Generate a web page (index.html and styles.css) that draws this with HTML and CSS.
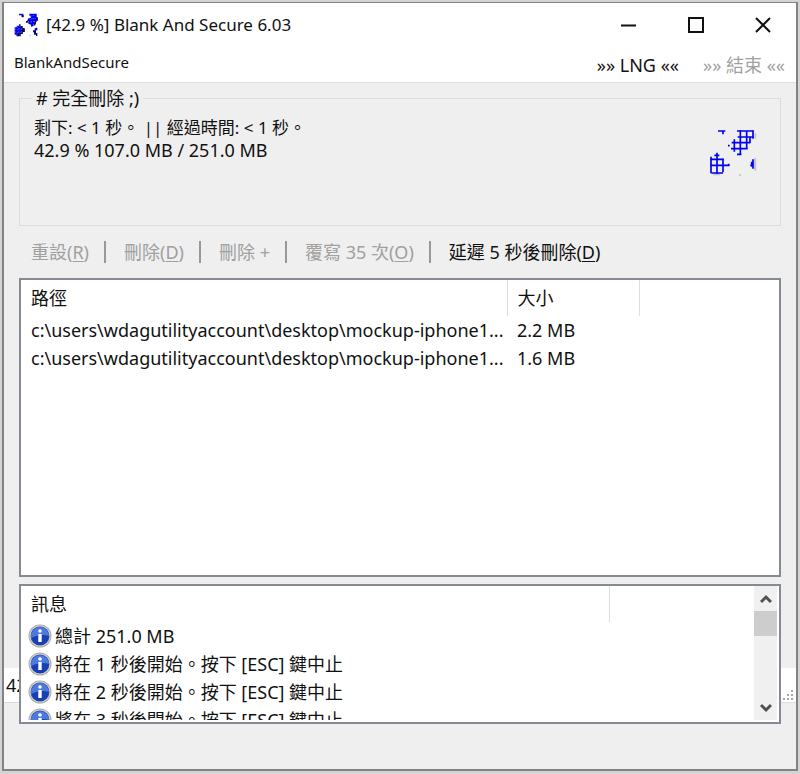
FILE: index.html
```html
<!DOCTYPE html>
<html lang="zh-Hant">
<head>
<meta charset="utf-8">
<meta name="viewport" content="width=device-width, initial-scale=1">
<title>[42.9 %] Blank And Secure 6.03</title>
<link rel="stylesheet" href="styles.css">
</head>
<body>
<svg class="defs" aria-hidden="true">
  <symbol id="info" viewBox="0 0 24 24">
    <circle cx="12" cy="12" r="11.5" fill="#a9a9a6"/>
    <circle cx="12" cy="12" r="10.6" fill="#d4d3cc"/>
    <circle cx="12" cy="12" r="9.4" fill="#1a3fb4"/>
    <path d="M3 12a9 9 0 0 1 18 0c-5-2-12-1-18 2z" fill="#4c7be0"/>
    <circle cx="12" cy="7" r="1.8" fill="#fff"/>
    <path d="M10.300 10h3.400v8h-3.400z" fill="#fff"/>
  </symbol>
</svg>
<div class="window">
  <header class="titlebar">
    <svg class="app-icon" viewBox="0 0 72 72" aria-hidden="true">
      <path d="M15 2h13v9h-6V7h-7z" fill="#1010e8"/>
      <path d="M24 6h5v7h-5z" fill="#111"/>
      <path d="M46 2h22v10h3v10l-6 4v6h-6v7l-8 2v-6l-8-3v-8l-4-1 5-8h6V8h-4z" fill="#0000f0"/>
      <path d="M68 14h3v9l-5 3v7l-6 6v-8h3v-7h5zM36 24h6v5h-6z" fill="#111"/>
      <path d="M2 43h6v-5h7v-4h5v6h6v8h6v8h-6v6h-6v7H8v-4H2z" fill="#0000f0"/>
      <path d="M20 39h5v6h7v12h-6v6h-6v7H8v-4h8v-7h6v-7h5v-5h-7z" fill="#111"/>
      <path d="M51 8v24M59 6v28M44 17h24M42 26h22M10 40v28M18 38v30M3 48h24M3 57h24" stroke="#8098ff" stroke-width="2" stroke-dasharray="3 6"/>
      <path d="M70 44v8h-4v8h4v9h-4v-4h-6v-7h-3v-6h5v-6h4v-2z" fill="#080890"/>
      <path d="M46 66h5v4h-5z" fill="#ccc"/>
    </svg>
    <h1 class="title">[42.9 %] Blank And Secure 6.03</h1>
    <div class="window-buttons">
      <button type="button" aria-label="最小化"><svg viewBox="0 0 16 16"><path d="M0 8.500h15"/></svg></button>
      <button type="button" aria-label="最大化"><svg viewBox="0 0 16 16"><path d="M1 1h14v14H1z"/></svg></button>
      <button type="button" aria-label="關閉"><svg viewBox="0 0 16 16"><path d="M1 1l14 14M15 1L1 15"/></svg></button>
    </div>
  </header>
  <nav class="menubar">
    <button type="button" class="menu-name">BlankAndSecure</button>
    <button type="button">»» LNG ««</button>
    <button type="button" disabled>»» 結束 ««</button>
  </nav>
  <main class="client">
    <div class="statusbar" aria-hidden="true">
      <span>42.9 %</span>
      <svg viewBox="0 0 12 12"><path d="M9 0h2v2H9zM5 4h2v2H5zM9 4h2v2H9zM1 8h2v2H1zM5 8h2v2H5zM9 8h2v2H9z"/></svg>
    </div>
    <fieldset class="progress">
      <legend># 完全刪除 ;)</legend>
      <div class="progress-row">
        <div class="progress-text">
          <p class="times">剩下: &lt; 1 秒。 || 經過時間: &lt; 1 秒。</p>
          <p>42.9 % 107.0 MB / 251.0 MB</p>
        </div>
        <svg class="emblem" viewBox="447 387 144 144" aria-hidden="true">
          <g stroke="#c4c4c4" stroke-width="5" fill="none">
            <path d="M586 400v16M460 523h20M537 525h7"/>
            <path d="M586 474l-4 18 4 20z" fill="#c4c4c4"/>
          </g>
          <g stroke="#0000f5" stroke-width="5" fill="none">
            <path d="M474 393h22M489 393v10"/>
            <path d="M531 393h49M533 411h47M515 428h56M513 446h50M531 463h13"/>
            <path d="M523 418v37M541 391v74M560 393v54M579 391v25M570 411v18"/>
            <path d="M504 437h5"/>
            <path d="M452 478h39M452 496h57M454 519h35M463 466h15M506 491v8"/>
            <path d="M453 470v50M471 458v63M489 476v41"/>
            <path d="M579 478v28M575 485v15M571 496h6"/>
          </g>
        </svg>
      </div>
    </fieldset>
    <div class="toolbar" role="toolbar" aria-label="動作">
      <button type="button" disabled>重設(<u>R</u>)</button>
      <button type="button" disabled>刪除(<u>D</u>)</button>
      <button type="button" disabled>刪除 +</button>
      <button type="button" disabled>覆寫 35 次(<u>O</u>)</button>
      <button type="button">延遲 5 秒後刪除(<u>D</u>)</button>
    </div>
    <section class="box files">
      <table>
        <colgroup><col class="col-path"><col class="col-size"><col></colgroup>
        <thead><tr><th scope="col">路徑</th><th scope="col">大小</th><td></td></tr></thead>
        <tbody>
          <tr><td>c:\users\wdagutilityaccount\desktop\mockup-iphone1...</td><td>2.2 MB</td><td></td></tr>
          <tr><td>c:\users\wdagutilityaccount\desktop\mockup-iphone1...</td><td>1.6 MB</td><td></td></tr>
        </tbody>
      </table>
    </section>
    <section class="box messages">
      <div class="message-view">
        <table>
          <colgroup><col class="col-message"><col></colgroup>
          <thead><tr><th scope="col">訊息</th><td></td></tr></thead>
          <tbody>
            <tr><td><div class="message"><svg><use href="#info"/></svg>總計 251.0 MB</div></td><td></td></tr>
            <tr><td><div class="message"><svg><use href="#info"/></svg>將在 1 秒後開始。按下 [ESC] 鍵中止</div></td><td></td></tr>
            <tr><td><div class="message"><svg><use href="#info"/></svg>將在 2 秒後開始。按下 [ESC] 鍵中止</div></td><td></td></tr>
            <tr><td><div class="message"><svg><use href="#info"/></svg>將在 3 秒後開始。按下 [ESC] 鍵中止</div></td><td></td></tr>
          </tbody>
        </table>
      </div>
      <div class="scrollbar">
        <button type="button" aria-label="向上捲動"><svg viewBox="0 0 12 10"><path d="M1 8l5-5 5 5"/></svg></button>
        <div class="track"><div class="thumb"></div></div>
        <button type="button" aria-label="向下捲動"><svg viewBox="0 0 12 10"><path d="M1 2l5 5 5-5"/></svg></button>
      </div>
    </section>
  </main>
</div>
</body>
</html>
```
FILE: styles.css
```css
* { box-sizing: border-box; }

body {
  margin: 0;
  padding: 2px 2px 3px;
  min-height: 100vh;
  display: flex;
  background: #d4d4d4;
  color: #111;
  font: 18px/22px "Noto Sans", "Noto Sans CJK TC", sans-serif;
}

h1, p { margin: 0; }

button {
  border: 0;
  padding: 0;
  background: none;
  color: inherit;
  font: inherit;
  white-space: nowrap;
}

button:disabled { color: #a0a0a0; }

.defs { position: absolute; width: 0; height: 0; }

.window {
  flex: 1;
  min-width: 0;
  display: flex;
  flex-direction: column;
  border: 2px solid #808285;
  border-top-width: 1px;
  background: #efefef;
}

.titlebar {
  display: flex;
  align-items: center;
  height: 44px;
  padding-left: 10px;
  background: #fff;
}

.app-icon { width: 24px; height: 24px; margin-right: 8px; }

.title {
  flex: 1;
  font-size: 17px;
  font-weight: 400;
}

.window-buttons { display: flex; }

.window-buttons button {
  display: grid;
  place-items: center;
  width: 67px;
  height: 44px;
}

.window-buttons svg {
  width: 16px;
  height: 16px;
  fill: none;
  stroke: #111;
  stroke-width: 2;
}

.menubar {
  display: flex;
  align-items: center;
  gap: 24px;
  height: 36px;
  padding: 0 11px 0 10px;
  background: #fff;
  border-bottom: 1px solid #dfdfdf;
}

.menu-name {
  margin-right: auto;
  padding-bottom: 5px;
  font-size: 15px;
}

.client {
  position: relative;
  z-index: 0;
  flex: 1;
  display: flex;
  flex-direction: column;
  padding: 4px 15px 45px;
}

/* The status bar lies behind the message list. */
.statusbar {
  position: absolute;
  z-index: -1;
  left: 0;
  right: 0;
  bottom: 66px;
  display: flex;
  align-items: center;
  justify-content: space-between;
  height: 35px;
  padding: 0 2px;
  background: #fff;
  border-bottom: 1px solid #dcdcdc;
}

.statusbar svg { width: 12px; height: 12px; align-self: flex-end; fill: #a8a8a8; }

.progress {
  min-width: 0;
  height: 139px;
  margin: 0;
  padding: 8px 23px 0 14px;
  border: 1px solid #dcdcdc;
}

.progress legend { padding: 0 4px; margin-left: -2px; }

.progress-row { display: flex; justify-content: space-between; }

.times { font-size: 17px; }

.emblem { width: 48px; height: 48px; margin-top: 12px; }

.toolbar {
  display: flex;
  align-items: center;
  height: 52px;
  padding-left: 12px;
}

.toolbar button + button {
  margin-left: 15px;
  padding-left: 18px;
  border-left: 2px solid #999;
}

.toolbar u { text-underline-offset: 2px; }

.box { border: 2px solid #868a92; background: #fff; }

.files { flex: 1; margin-bottom: 7px; overflow: hidden; }

table {
  width: 100%;
  table-layout: fixed;
  border-collapse: collapse;
}

.col-path { width: 486px; }
.col-size { width: 132px; }
.col-message { width: 588px; }

th, td {
  height: 28px;
  padding: 0 0 0 10px;
  font-weight: 400;
  text-align: left;
  white-space: nowrap;
}

thead th, thead td { height: 36px; }
thead th { border-right: 1px solid #dedede; }

.messages {
  display: flex;
  height: 140px;
  padding: 0 2px 2px 0;
}

.message-view { flex: 1; min-width: 0; overflow: hidden; }
.message-view tbody td { padding-left: 7px; }

.message { display: flex; align-items: center; gap: 3px; }
.message svg { width: 24px; height: 24px; }

.scrollbar {
  display: flex;
  flex-direction: column;
  width: 23px;
  background: #f0f0f0;
}

.scrollbar button { display: grid; place-items: center; height: 25px; }

.scrollbar svg {
  width: 12px;
  height: 10px;
  fill: none;
  stroke: #505050;
  stroke-width: 3;
}

.track { flex: 1; }
.thumb { height: 25px; background: #cdcdcd; }
```
